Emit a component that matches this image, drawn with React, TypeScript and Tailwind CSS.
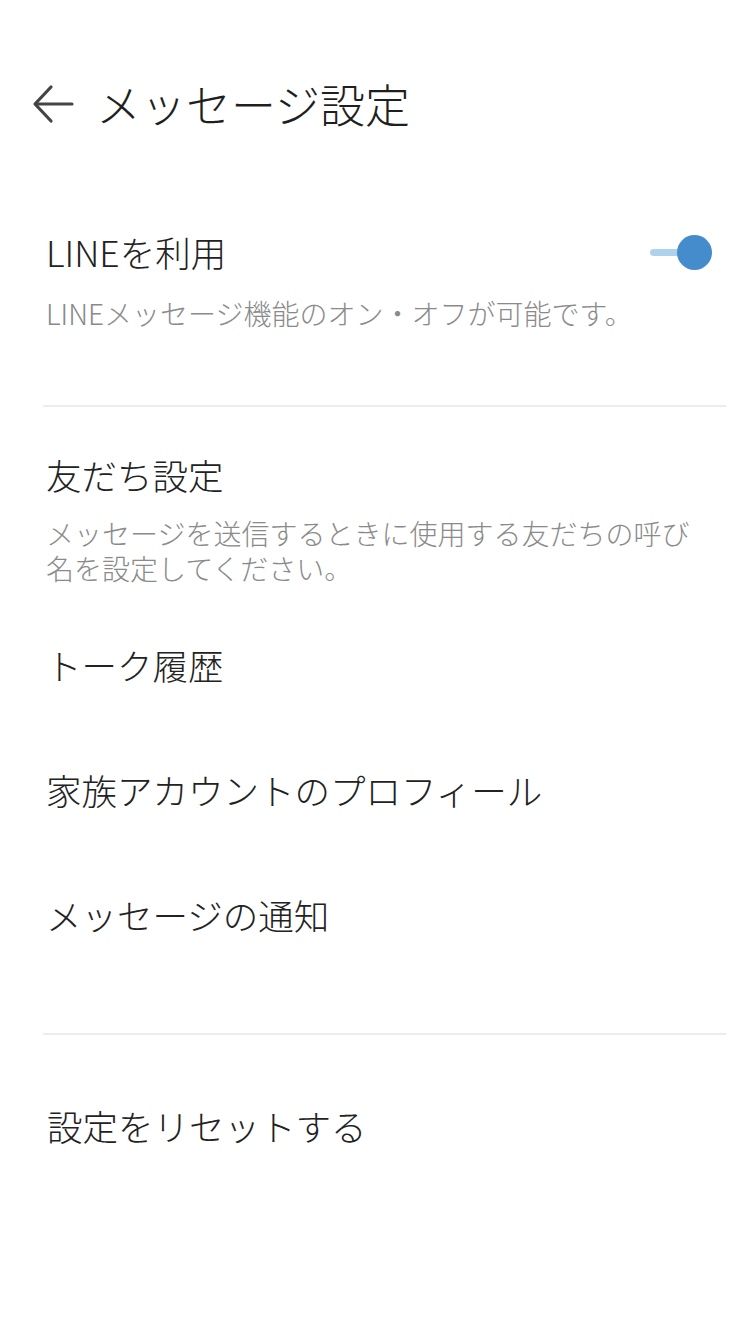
import React from 'react';

const font = { fontFamily: '"Noto Sans CJK JP", "Noto Sans", sans-serif' };

const BackArrow: React.FC = () => (
  <svg width="44" height="42" viewBox="0 0 44 42" fill="none" stroke="#444444" strokeWidth="3.2" strokeLinecap="round" strokeLinejoin="round">
    <path d="M41 21H5" />
    <path d="M20 4L4 21l16 17" />
  </svg>
);

const Toggle: React.FC = () => (
  <div className="relative w-[64px] h-[36px] flex items-center">
    <div className="absolute left-[2px] w-[40px] h-[7px] rounded-full bg-[#afd2ec]" />
    <div className="absolute right-0 w-[35px] h-[35px] rounded-full bg-[#458ccc]" />
  </div>
);

const Divider: React.FC = () => <div className="ml-[43px] mr-[24px] h-[2px] bg-[#ececec]" />;

const simpleRows = ['トーク履歴', '家族アカウントのプロフィール', 'メッセージの通知'];

export default function App() {
  return (
    <div className="w-[750px] h-[1334px] overflow-hidden pt-[68px] bg-white text-[#222222] font-light" style={font}>
      <div className="h-[72px] flex items-center pl-[31px]">
        <BackArrow />
        <h1 className="ml-[21px] text-[45px] leading-[56px] font-light text-[#1f1f1f]">メッセージ設定</h1>
      </div>

      <section className="pt-[88px] pb-[74px] pl-[46px] pr-[38px]">
        <div className="flex items-center justify-between">
          <span className="text-[35.5px] leading-[48px]">LINEを利用</span>
          <Toggle />
        </div>
        <p className="mt-[19px] text-[28px] leading-[36px] text-[#8a8a8a]">LINEメッセージ機能のオン・オフが可能です。</p>
      </section>

      <Divider />

      <section className="pt-[44px] pl-[46px] pr-[52px]">
        <div className="text-[35.5px] leading-[48px]">友だち設定</div>
        <p className="mt-[17px] text-[28px] leading-[35px] text-[#8a8a8a]">
          メッセージを送信するときに使用する友だちの呼び名を設定してください。
        </p>
      </section>

      <div className="mt-[16px] mb-[56px]">
        {simpleRows.map((label) => (
          <div key={label} className="h-[125px] flex items-center pl-[46px] text-[35.5px]">
            {label}
          </div>
        ))}
      </div>

      <Divider />

      <div className="pt-[67px] pl-[47px] text-[35.5px] leading-[48px]">設定をリセットする</div>
    </div>
  );
}
